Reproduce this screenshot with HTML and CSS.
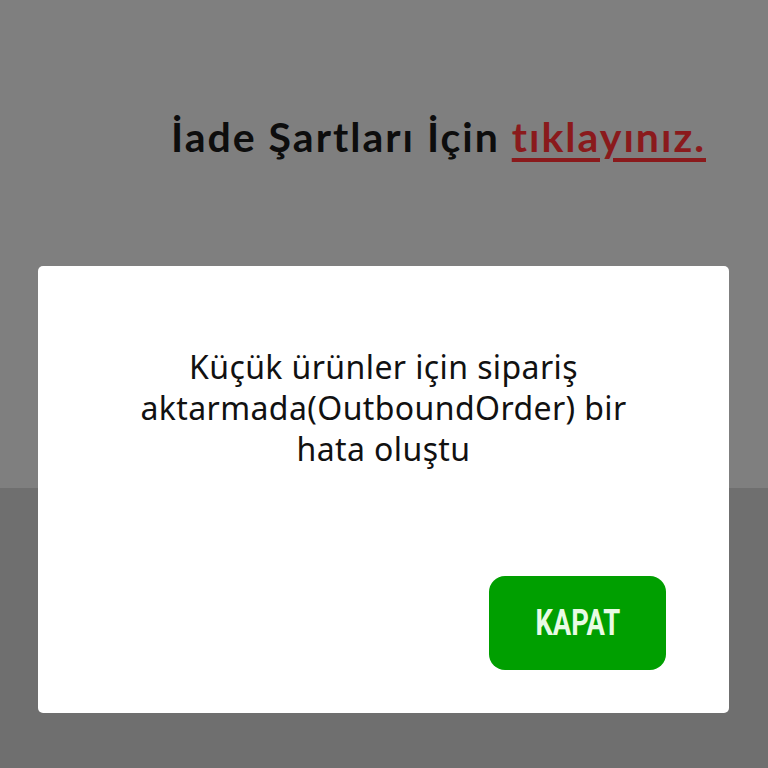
FILE: index.html
```html
<!DOCTYPE html>
<html lang="tr">
<head>
<meta charset="utf-8">
<link rel="stylesheet" href="styles.css">
</head>
<body>
<div class="page">
  <div class="top">
    <p class="terms">İade Şartları İçin <a class="link" href="#">tıklayınız.</a></p>
  </div>
  <div class="bottom"></div>
</div>
<div class="modal">
  <div class="message-wrap">
    <p class="message">Küçük ürünler için sipariş aktarmada(OutboundOrder) bir hata oluştu</p>
  </div>
  <div class="actions">
    <button class="close"><span class="close-label">KAPAT</span></button>
  </div>
</div>
</body>
</html>
```
FILE: styles.css
```css
html, body {
  margin: 0;
  padding: 0;
}
body {
  width: 768px;
  height: 768px;
  overflow: hidden;
  position: relative;
  font-family: "Noto Sans", sans-serif;
}
.page {
  display: flex;
  flex-direction: column;
  height: 768px;
}
.top {
  height: 488px;
  background: #7f7f7f;
  display: flex;
  justify-content: flex-end;
  padding-right: 62px;
  box-sizing: border-box;
}
.bottom {
  flex: 1;
  background: #6f6f6f;
}
.terms {
  margin: 107px 0 0 0;
  font-family: Lato, sans-serif;
  font-weight: 700;
  font-size: 41px;
  letter-spacing: 2px;
  line-height: 60px;
  color: #0d0d0d;
  white-space: nowrap;
}
.link {
  color: #8a1a1c;
  text-decoration: underline;
  text-decoration-thickness: 4px;
  text-underline-offset: 6px;
}
.modal {
  position: absolute;
  left: 38px;
  top: 266px;
  width: 691px;
  height: 447px;
  background: #ffffff;
  border-radius: 5px;
  box-sizing: border-box;
  padding: 80px 63px 43px 63px;
  display: flex;
  flex-direction: column;
}
.message-wrap {
  flex: 1;
  display: flex;
  justify-content: center;
}
.message {
  margin: 0;
  width: 540px;
  text-align: center;
  font-size: 32px;
  letter-spacing: 0.4px;
  line-height: 41px;
  color: #111111;
}
.actions {
  display: flex;
  justify-content: flex-end;
}
.close {
  width: 177px;
  height: 94px;
  border: none;
  border-radius: 16px;
  background: #009f00;
  display: flex;
  align-items: center;
  justify-content: center;
  padding: 0;
}
.close-label {
  display: inline-block;
  font-family: Roboto, sans-serif;
  font-weight: 700;
  font-size: 36px;
  color: #e8fbe4;
  transform: scaleX(0.76);
}
```
